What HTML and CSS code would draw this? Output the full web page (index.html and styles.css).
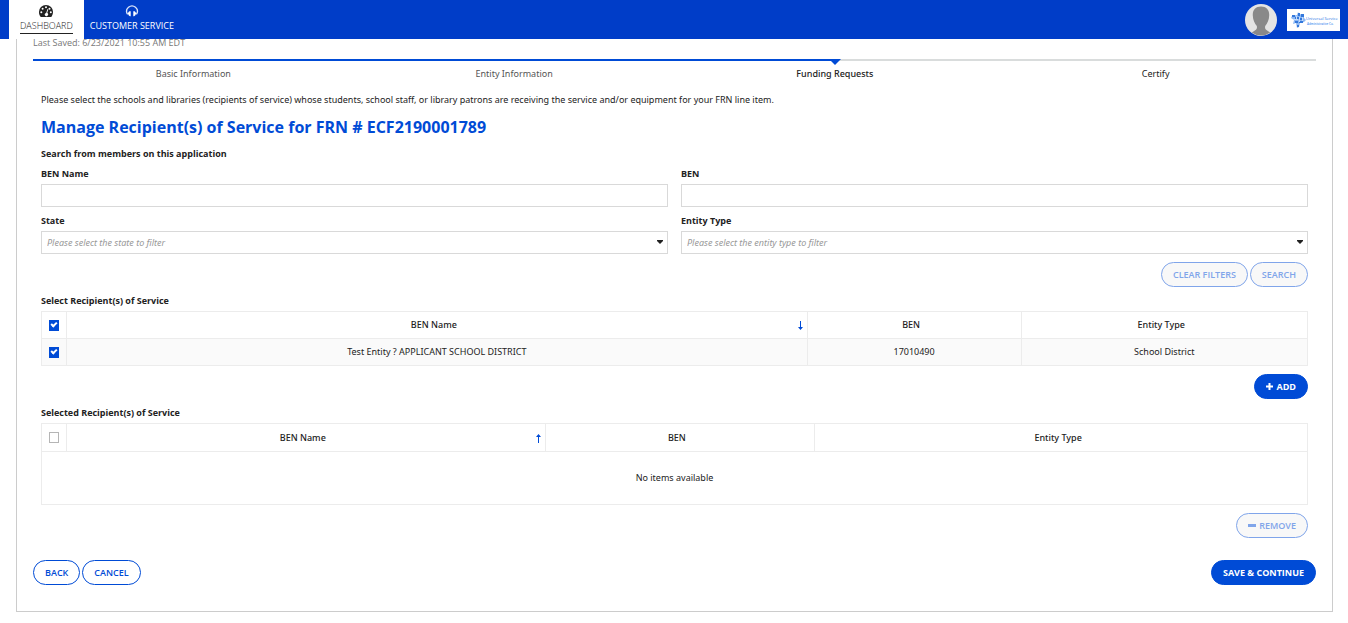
FILE: index.html
```html
<!DOCTYPE html>
<html lang="en">
<head>
<meta charset="utf-8">
<title>Manage Recipient(s) of Service</title>
<link rel="stylesheet" href="styles.css">
</head>
<body>
<header class="topbar">
  <nav class="tabs">
    <a class="tab tab-active" href="#">
      <svg class="tab-icon" viewBox="0 0 14 12" aria-hidden="true"><path fill="#222" d="M7 0a7 7 0 0 0-7 7.2c0 1.6.5 3 1.300 4.300q.2.4.7.4h10q.5 0 .7-.4A7.500 7.500 0 0 0 14 7.200 7 7 0 0 0 7 0z"/><g fill="#fff"><circle cx="2.300" cy="7.200" r="1"/><circle cx="3.600" cy="3.800" r="1"/><circle cx="7" cy="2.300" r="1"/><circle cx="10.500" cy="3.800" r="1"/><circle cx="11.800" cy="7.200" r="1"/><path d="M8.500 4l.8.3-1.100 3.800a1.600 1.600 0 1 1-1-.2z"/></g></svg>
      <span class="tab-label">DASHBOARD</span>
    </a>
    <a class="tab" href="#">
      <svg class="tab-icon" viewBox="0 0 14 12" aria-hidden="true"><path fill="none" stroke="#dce6fa" stroke-width="1.300" d="M2.600 9.300A5.300 5.300 0 1 1 11.400 9.300"/><path fill="#fff" d="M4.400 6.200h1.300v5H4.900Q3.400 10.600 2.900 8.500 3.400 6.500 4.400 6.200zM9.600 6.200H8.300v5h.8q1.500-.6 2-2.700-.5-2-1.500-2.300z"/></svg>
      <span class="tab-label">CUSTOMER SERVICE</span>
    </a>
  </nav>
  <div class="account">
    <button class="avatar" type="button" aria-label="User profile">
      <svg viewBox="0 0 32 32" aria-hidden="true"><circle cx="16" cy="16" r="16" fill="#e4e4e4"/><path fill="#898989" d="M16 2.500c-5.500 0-8.500 3.500-8.200 9 .1 4.500 2 8 4 10.500.6 2.500-.3 4-3 5.200l-2 1.200a15.500 15.500 0 0 0 18.400 0l-2-1.200c-2.700-1.200-3.600-2.700-3-5.200 2-2.500 3.900-6 4-10.500.3-5.500-2.700-9-8.200-9z"/></svg>
    </button>
    <svg class="logo" viewBox="0 0 53 22" role="img" aria-label="Universal Service Administrative Co.">
      <rect width="53" height="22" fill="#fff"/>
      <path fill="#8db8f3" d="M5 7l5-1 1-3 1 2 5 1v3l2 2-2 2-4 1-1 4-2 1-1-5-3 1 1-4-3-2z"/>
      <path fill="#3478dc" d="M5 6h3v2H5zM11 4h2v3h-2zM14 5h3v3h-3zM8 8h4v2H8zM13 9h2v2h-2zM8 12h3v2H8zM12 12h4v2h-4zM10 16h2v2h-2z"/>
      <path fill="#c5dcfb" d="M9 7h1v3H9zM12 8h1v5h-1zM6 10h5v1H6zM15 8h1v4h-1z"/>
      <text class="logo-name" x="19" y="11">Universal Service</text>
      <text class="logo-sub" x="20" y="16">Administrative Co.</text>
    </svg>
  </div>
</header>

<main class="card">
  <p class="saved">Last Saved: 6/23/2021 10:55 AM EDT</p>
  <ol class="steps">
    <li class="step step-done">Basic Information</li>
    <li class="step step-done">Entity Information</li>
    <li class="step step-current">Funding Requests</li>
    <li class="step step-next">Certify</li>
  </ol>

  <div class="content">
    <p class="intro">Please select the schools and libraries (recipients of service) whose students, school staff, or library patrons are receiving the service and/or equipment for your FRN line item.</p>
    <h1 class="title">Manage Recipient(s) of Service for FRN # ECF2190001789</h1>

    <h2 class="section-title">Search from members on this application</h2>
    <form class="filters">
      <div class="field"><label for="ben-name">BEN Name</label><input class="control" id="ben-name" type="text"></div>
      <div class="field"><label for="ben">BEN</label><input class="control" id="ben" type="text"></div>
      <div class="field"><label for="state">State</label><div class="select-wrap"><select class="control" id="state"><option>Please select the state to filter</option></select><svg class="caret" viewBox="0 0 6 4" aria-hidden="true"><path d="M0 0h6v1L3 4 0 1z"/></svg></div></div>
      <div class="field"><label for="entity-type">Entity Type</label><div class="select-wrap"><select class="control" id="entity-type"><option>Please select the entity type to filter</option></select><svg class="caret" viewBox="0 0 6 4" aria-hidden="true"><path d="M0 0h6v1L3 4 0 1z"/></svg></div></div>
    </form>
    <div class="actions">
      <button class="btn" type="button" disabled>CLEAR FILTERS</button>
      <button class="btn" type="button" disabled>SEARCH</button>
    </div>

    <h2 class="section-title" id="available">Select Recipient(s) of Service</h2>
    <table class="grid" aria-labelledby="available">
      <colgroup><col class="col-check"><col class="col-name-wide"><col class="col-ben-narrow"><col></colgroup>
      <thead>
        <tr><th><input class="check" type="checkbox" aria-label="Select all available" checked></th><th><div class="sortable">BEN Name<svg class="arrow" viewBox="0 0 5 9" aria-hidden="true"><path d="M2 0h1v6h2L2.500 9 0 6h2z"/></svg></div></th><th>BEN</th><th>Entity Type</th></tr>
      </thead>
      <tbody>
        <tr><td><input class="check" type="checkbox" aria-label="Select Test Entity" checked></td><td>Test Entity ? APPLICANT SCHOOL DISTRICT</td><td>17010490</td><td>School District</td></tr>
      </tbody>
    </table>
    <div class="actions">
      <button class="btn btn-primary" type="button"><svg class="btn-icon" viewBox="0 0 7 7" aria-hidden="true"><path d="M2.500 0h2v2.500H7v2H4.500V7h-2V4.500H0v-2h2.500z"/></svg>ADD</button>
    </div>

    <h2 class="section-title" id="selected">Selected Recipient(s) of Service</h2>
    <table class="grid grid-selected" aria-labelledby="selected">
      <colgroup><col class="col-check"><col class="col-name"><col class="col-ben"><col></colgroup>
      <thead>
        <tr><th><input class="check" type="checkbox" aria-label="Select all selected"></th><th><div class="sortable">BEN Name<svg class="arrow" viewBox="0 0 5 9" aria-hidden="true"><path d="M2 9h1V3h2L2.500 0 0 3h2z"/></svg></div></th><th>BEN</th><th>Entity Type</th></tr>
      </thead>
      <tbody>
        <tr><td class="empty" colspan="4">No items available</td></tr>
      </tbody>
    </table>
    <div class="actions">
      <button class="btn" type="button" disabled><svg class="btn-icon btn-icon-wide" viewBox="0 0 8 7" aria-hidden="true"><path d="M0 2h8v3H0z"/></svg>REMOVE</button>
    </div>
  </div>

  <footer class="footer">
    <div class="footer-group">
      <button class="btn" type="button">BACK</button>
      <button class="btn" type="button">CANCEL</button>
    </div>
    <button class="btn btn-primary" type="button">SAVE &amp; CONTINUE</button>
  </footer>
</main>
</body>
</html>
```

FILE: styles.css
```css
* { box-sizing: border-box; }
body {
  margin: 0;
  background: #fff;
  color: #222;
  font: 9px/14px "Noto Sans", "Open Sans", sans-serif;
}
p, h1, h2, ol { margin: 0; padding: 0; }
button, input, select { font: inherit; margin: 0; }

.topbar {
  position: sticky;
  top: 0;
  z-index: 10;
  display: flex;
  justify-content: space-between;
  height: 39px;
  padding: 0 8px 0 9px;
  background: #003dc8;
  font-family: "Open Sans", sans-serif;
}
.tabs { display: flex; }
.tab {
  display: flex;
  flex-direction: column;
  align-items: center;
  padding: 5px 6px 0;
  color: #fff;
  text-decoration: none;
}
.tab-active { padding: 5px 11px 0; background: #fff; color: #222; font-weight: 300; }
.tab-active .tab-label { border-bottom: 1px solid #222; }
.tab-icon { width: 14px; height: 12px; }
.tab-label { margin-top: 2px; line-height: 14px; }
.account { display: flex; align-items: center; gap: 10px; }
.avatar { width: 32px; height: 32px; padding: 0; border: 0; background: none; }
.avatar svg { display: block; }
.logo { width: 53px; height: 22px; }
.logo-name { font-size: 4px; fill: #1f6fe6; }
.logo-sub { font-size: 3px; font-weight: 600; fill: #4f93f0; }

.card {
  margin: -3px 15px 11px 16px;
  padding: 0 16px 26px;
  border: 1px solid #ccc;
  border-top: 0;
}
.saved { color: #777; font-family: "Open Sans", sans-serif; line-height: 13px; }
.steps { display: flex; margin-top: 10px; list-style: none; }
.step {
  position: relative;
  flex: 1;
  padding-top: 6px;
  border-top: 2px solid #d9dcdc;
  color: #555;
  text-align: center;
}
.step-done { border-color: #004bd6; }
.step-current {
  border-image: linear-gradient(to right, #004bd6 50%, #d9dcdc 50%) 2;
  color: #222;
  font-weight: 500;
}
.step-current::before {
  content: "";
  position: absolute;
  top: -2px;
  left: calc(50% - 6px);
  border: 6px solid transparent;
  border-top-color: #004bd6;
  border-bottom: 0;
}
.step-next { color: #222; }

.content { padding: 12px 8px 0; }
.title {
  margin: 8px 0;
  color: #004bd6;
  font: 700 16px/24px "Open Sans", sans-serif;
}
.section-title { margin-top: 7px; font: 700 9px/14px "Open Sans", sans-serif; }
.filters {
  display: grid;
  grid-template-columns: 1fr 1fr;
  gap: 7px 13px;
  margin-top: 6px;
}
.field label { display: block; margin-bottom: 3px; font-family: "Open Sans", sans-serif; font-weight: 700; }
.control {
  display: block;
  width: 100%;
  height: 23px;
  padding: 0 5px;
  border: 1px solid #d9d9d9;
  border-radius: 0;
  background: #fff;
  color: #999;
}
.select-wrap { position: relative; }
select.control { appearance: none; font-style: italic; }
.caret { position: absolute; right: 5px; top: 9px; width: 6px; height: 4px; fill: #222; pointer-events: none; }

.actions { display: flex; justify-content: flex-end; gap: 2px; margin-top: 8px; }
.btn {
  display: flex;
  align-items: center;
  gap: 3px;
  height: 25px;
  padding: 0 11px;
  border: 1px solid #004bd6;
  border-radius: 13px;
  background: #fff;
  color: #004bd6;
  font-family: "Open Sans", sans-serif;
  font-weight: 600;
}
.btn:disabled { border-color: #80a5ea; background: #f8f8f8; color: #80a5ea; }
.btn-primary { background: #004bd6; color: #fff; font-weight: 700; }
.btn-icon { width: 7px; height: 7px; fill: currentColor; }
.btn-icon-wide { width: 8px; }

.grid {
  width: 100%;
  margin-top: 3px;
  border-collapse: collapse;
  table-layout: fixed;
}
.grid th, .grid td { height: 27px; padding: 0; border: 1px solid #ececec; text-align: center; }
.grid th { padding-right: 6px; font-weight: 500; }
.grid th:first-child { padding: 0; }
.grid tbody td { background: #fafafa; }
.grid-selected th { height: 28px; }
.grid tbody td.empty { height: 53px; background: #fff; }
.col-check { width: 25px; }
.col-name-wide { width: 58.5%; }
.col-ben-narrow { width: 16.9%; }
.col-name { width: 37.8%; }
.col-ben { width: 21.3%; }
.sortable { position: relative; }
.arrow { position: absolute; right: -2px; top: 3px; width: 5px; height: 9px; fill: #004bd6; }
.check {
  display: block;
  width: 10px;
  height: 11px;
  margin: 0 auto;
  appearance: none;
  border: 1px solid #b5b5b5;
  background: #fff;
}
.check:checked {
  border-color: #004bd6;
  background: #004bd6;
}
.check:checked::before {
  content: "";
  display: block;
  box-sizing: content-box;
  width: 2px;
  height: 4px;
  margin: 0 auto;
  border: solid #fff;
  border-width: 0 2px 2px 0;
  transform: rotate(45deg);
}

.footer { display: flex; justify-content: space-between; margin-top: 22px; }
.footer-group { display: flex; gap: 2px; }
```
